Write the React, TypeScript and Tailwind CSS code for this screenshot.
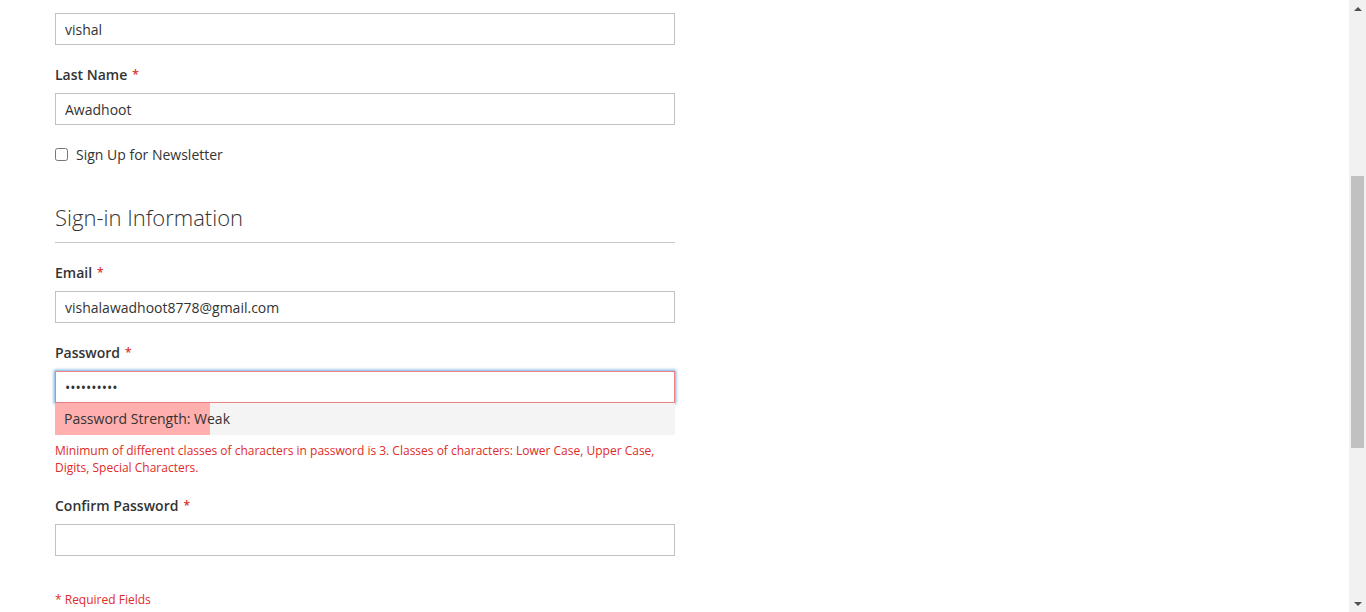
import React from "react";

const font = { fontFamily: '"Open Sans", "Liberation Sans", sans-serif' };

function Label({ text }: { text: string }) {
  return (
    <label className="flex items-center h-[20px] mb-[8px] text-[14px] leading-[20px] font-semibold text-[#333]">
      {text}
      <span className="ml-[5px] text-[12px] leading-[20px] text-[#e02b27]">*</span>
    </label>
  );
}

function TextInput({ value, type = "text" }: { value: string; type?: string }) {
  return (
    <input
      type={type}
      defaultValue={value}
      readOnly
      className="
        block
        w-full
        h-[32px]
        px-[9px]
        border
        border-[#c2c2c2]
        bg-white
        text-[14px]
        text-[#333]
        outline-none
      "
      style={font}
    />
  );
}

function Scrollbar() {
  return (
    <div className="w-[17px] h-[612px] bg-[#f1f1f1] flex flex-col items-center shrink-0">
      <div className="h-[17px] flex items-center justify-center">
        <div className="w-0 h-0 border-l-[4px] border-r-[4px] border-b-[4px] border-l-transparent border-r-transparent border-b-[#505050]" />
      </div>
      <div className="flex-1 w-full flex flex-col">
        <div className="h-[159px]" />
        <div className="mx-[2px] h-[272px] bg-[#c1c1c1]" />
      </div>
      <div className="h-[17px] flex items-center justify-center">
        <div className="w-0 h-0 border-l-[4px] border-r-[4px] border-t-[4px] border-l-transparent border-r-transparent border-t-[#505050]" />
      </div>
    </div>
  );
}

export default function App() {
  return (
    <div className="flex w-[1366px] h-[612px] overflow-hidden bg-white" style={font}>
      <main className="flex-1 pl-[55px] pt-[13px]">
        <form className="w-[620px] text-[#333]" onSubmit={(e) => e.preventDefault()}>
          <div className="mb-[20px]">
            <TextInput value="vishal" />
          </div>

          <div className="mb-[20px]">
            <Label text="Last Name" />
            <TextInput value="Awadhoot" />
          </div>

          <div className="flex items-center gap-[8px] h-[19px]">
            <input type="checkbox" className="w-[13px] h-[13px] m-0" />
            <span className="text-[14px] text-[#333]">Sign Up for Newsletter</span>
          </div>

          <div className="mt-[40px] pb-[12px] border-b border-[#c6c6c6] mb-[20px]">
            <h2 className="text-[22px] leading-[26px] font-light text-[#333]">
              Sign-in Information
            </h2>
          </div>

          <div className="mb-[20px]">
            <Label text="Email" />
            <TextInput value="vishalawadhoot8778@gmail.com" />
          </div>

          <div className="mb-[20px]">
            <Label text="Password" />
            <input
              type="password"
              defaultValue="abcdefghij"
              readOnly
              className="
                block
                w-full
                h-[32px]
                px-[9px]
                border
                border-[#ed8380]
                bg-white
                text-[14px]
                text-[#333]
                outline-none
                shadow-[0_0_3px_1px_#68a8e0]
              "
            />
            <div className="relative h-[32px] bg-[#f4f4f4]">
              <div className="absolute left-0 top-0 h-full w-[155px] bg-[#ffafae]" />
              <div className="relative px-[9px] text-[14px] leading-[32px] text-[#333]">
                Password Strength: Weak
              </div>
            </div>
            <div className="mt-[7px] text-[12px] leading-[17px] text-[#e02b27]">
              Minimum of different classes of characters in password is 3. Classes of characters: Lower Case, Upper Case, Digits, Special Characters.
            </div>
          </div>

          <div className="mb-[35px]">
            <Label text="Confirm Password" />
            <TextInput value="" type="password" />
          </div>

          <div className="text-[12px] leading-[17px] text-[#e02b27]">* Required Fields</div>
        </form>
      </main>
      <Scrollbar />
    </div>
  );
}
